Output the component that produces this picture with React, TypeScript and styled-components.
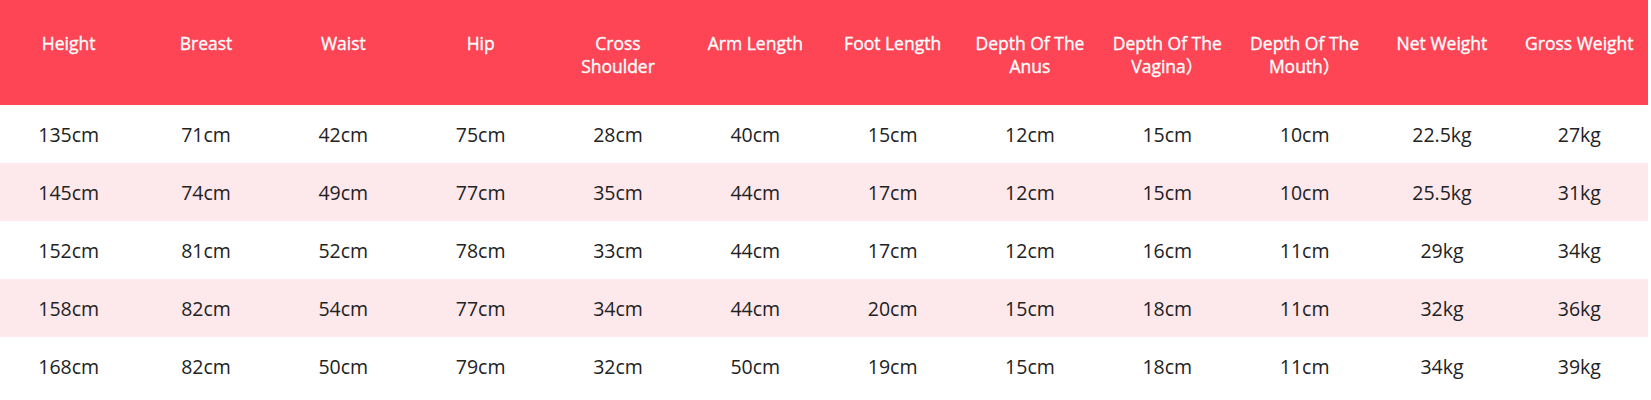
import React from "react";
import styled, { createGlobalStyle } from "styled-components";

const headers = [
  "Height",
  "Breast",
  "Waist",
  "Hip",
  "Cross Shoulder",
  "Arm Length",
  "Foot Length",
  "Depth Of The Anus",
  "Depth Of The Vagina）",
  "Depth Of The Mouth）",
  "Net Weight",
  "Gross Weight",
];

const rows = [
  ["135cm", "71cm", "42cm", "75cm", "28cm", "40cm", "15cm", "12cm", "15cm", "10cm", "22.5kg", "27kg"],
  ["145cm", "74cm", "49cm", "77cm", "35cm", "44cm", "17cm", "12cm", "15cm", "10cm", "25.5kg", "31kg"],
  ["152cm", "81cm", "52cm", "78cm", "33cm", "44cm", "17cm", "12cm", "16cm", "11cm", "29kg", "34kg"],
  ["158cm", "82cm", "54cm", "77cm", "34cm", "44cm", "20cm", "15cm", "18cm", "11cm", "32kg", "36kg"],
  ["168cm", "82cm", "50cm", "79cm", "32cm", "50cm", "19cm", "15cm", "18cm", "11cm", "34kg", "39kg"],
];

const GlobalStyle = createGlobalStyle`
  body {
    margin: 0;
    background: #fff;
    font-family: "Open Sans", "Liberation Sans", "Noto Sans CJK SC", sans-serif;
  }
`;

const App: React.FC = () => (
  <>
    <GlobalStyle />
    <Wrapper>
      <SizeTable>
        <thead>
          <tr>
            {headers.map((h) => (
              <HeadCell key={h}>{h}</HeadCell>
            ))}
          </tr>
        </thead>
        <tbody>
          {rows.map((row, i) => (
            <Row key={i} striped={i % 2 === 1}>
              {row.map((v, j) => (
                <Cell key={j}>{v}</Cell>
              ))}
            </Row>
          ))}
        </tbody>
      </SizeTable>
    </Wrapper>
  </>
);

const Wrapper = styled.div`
  width: 1648px;
`;

const SizeTable = styled.table`
  width: 100%;
  border-collapse: collapse;
  table-layout: fixed;
`;

const HeadCell = styled.th`
  background: #fe4556;
  color: #fff;
  font-weight: 400;
  -webkit-text-stroke: 0.35px #fff;
  font-size: 17.5px;
  line-height: 23px;
  height: 105px;
  box-sizing: border-box;
  padding: 32px 8px 0;
  vertical-align: top;
  text-align: center;
`;

const Row = styled.tr<{ striped: boolean }>`
  background: ${(props) => (props.striped ? "#fde8ec" : "#fff")};
`;

const Cell = styled.td`
  height: 58px;
  box-sizing: border-box;
  padding: 0;
  text-align: center;
  vertical-align: middle;
  font-size: 19.5px;
  color: #222;
`;

export default App;
